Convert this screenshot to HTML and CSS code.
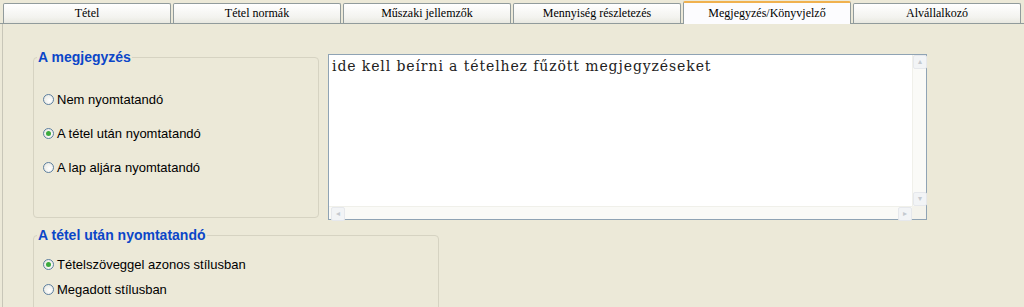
FILE: index.html
```html
<!DOCTYPE html>
<html>
<head>
  <title>Tétel - Megjegyzés</title>
  <link rel="stylesheet" href="styles.css">
</head>
<body>
  <div class="tabs">
    <div class="tab">Tétel</div>
    <div class="tab">Tétel normák</div>
    <div class="tab">Műszaki jellemzők</div>
    <div class="tab">Mennyiség részletezés</div>
    <div class="tab active">Megjegyzés/Könyvjelző</div>
    <div class="tab">Alvállalkozó</div>
  </div>

  <div class="page">
    <div class="top-row">
      <fieldset class="group group-note">
        <legend>A megjegyzés</legend>
        <div class="options wide">
          <label class="option"><span class="radio"></span>Nem nyomtatandó</label>
          <label class="option"><span class="radio checked"></span>A tétel után nyomtatandó</label>
          <label class="option"><span class="radio"></span>A lap aljára nyomtatandó</label>
        </div>
      </fieldset>

      <div class="memo">
        <div class="memo-text">ide kell beírni a tételhez fűzött megjegyzéseket</div>
        <div class="vscroll">
          <span class="sbtn">&#9652;</span>
          <span class="track"></span>
          <span class="sbtn">&#9662;</span>
        </div>
        <div class="hscroll">
          <span class="sbtn">&#9666;</span>
          <span class="track"></span>
          <span class="sbtn">&#9656;</span>
        </div>
        <div class="corner"></div>
      </div>
    </div>

    <fieldset class="group group-style">
      <legend>A tétel után nyomtatandó</legend>
      <div class="options">
        <label class="option"><span class="radio checked"></span>Tételszöveggel azonos stílusban</label>
        <label class="option"><span class="radio"></span>Megadott stílusban</label>
      </div>
    </fieldset>
  </div>
</body>
</html>
```

FILE: styles.css
```css
body {
  margin: 0;
  padding: 0;
  background: #ece9d8;
  font-family: "Liberation Sans", Arial, sans-serif;
  font-size: 13px;
  color: #000;
  overflow: hidden;
}

/* tab strip */
.tabs {
  display: flex;
  gap: 2px;
  padding: 3px 3px 0 3px;
  height: 20px;
  border-bottom: 1px solid #919b9c;
}

.tab {
  flex: 1;
  border: 1px solid #919b9c;
  border-bottom: none;
  border-radius: 2px 2px 0 0;
  background: linear-gradient(#ffffff, #f3f3ef 70%, #e8e8e0);
  font-family: "Liberation Serif", "Times New Roman", serif;
  font-size: 12px;
  text-align: center;
  line-height: 19px;
}

.tab.active {
  margin-top: -2px;
  margin-bottom: -1px;
  background: #fcfcfe;
  border-top: 2px solid #f0b14e;
  line-height: 21px;
}

/* content */
.page {
  box-sizing: border-box;
  border-left: 1px solid #c8c6b8;
  margin-left: 2px;
  height: 283px;
  padding: 26px 0 0 30px;
}

.top-row {
  display: flex;
  align-items: flex-start;
  gap: 9px;
}

.group {
  margin: 0;
  padding: 0;
  border: 1px solid #d6d3c2;
  border-radius: 4px;
}

.group legend {
  margin-left: 3px;
  padding: 0 1px;
  color: #0b46c8;
  font-weight: bold;
  font-size: 14px;
  line-height: 14px;
}

.group-note {
  width: 284px;
  height: 166px;
}

.group-style {
  width: 404px;
  height: 90px;
  margin-top: 8px;
}

.options {
  display: flex;
  flex-direction: column;
  gap: 10px;
  padding: 15px 0 0 9px;
}

.options.wide {
  gap: 19px;
  padding-top: 28px;
}

.option {
  display: flex;
  align-items: center;
  gap: 3px;
  height: 15px;
}

.radio {
  width: 9px;
  height: 9px;
  border: 1px solid #5c7fa0;
  border-radius: 50%;
  background: radial-gradient(circle at 60% 60%, #ffffff, #e4e4dc);
  position: relative;
}

.radio.checked::after {
  content: "";
  position: absolute;
  left: 2px;
  top: 2px;
  width: 5px;
  height: 5px;
  border-radius: 50%;
  background: #3daa3d;
}

/* memo box */
.memo {
  margin-top: 4px;
  width: 597px;
  height: 164px;
  border: 1px solid #8fa3b4;
  background: #fff;
  display: grid;
  grid-template-columns: 1fr 14px;
  grid-template-rows: 1fr 13px;
}

.memo-text {
  padding: 3px 3px;
  font-family: "DejaVu Serif", "Liberation Serif", serif;
  font-size: 14px;
  letter-spacing: 0.9px;
  color: #222;
}

.vscroll,
.hscroll {
  display: flex;
  background: #fafaf7;
}

.vscroll {
  flex-direction: column;
  border-left: 1px solid #f0f0ea;
}

.hscroll {
  padding-left: 2px;
  border-top: 1px solid #f0f0ea;
}

.track { flex: 1; }

.sbtn {
  width: 12px;
  height: 12px;
  border: 1px solid #e6e8ec;
  border-radius: 2px;
  background: #f2f4f6;
  color: #c4c9cf;
  font-size: 8px;
  line-height: 12px;
  text-align: center;
}

.corner {
  background: #f4f3ec;
}
```
